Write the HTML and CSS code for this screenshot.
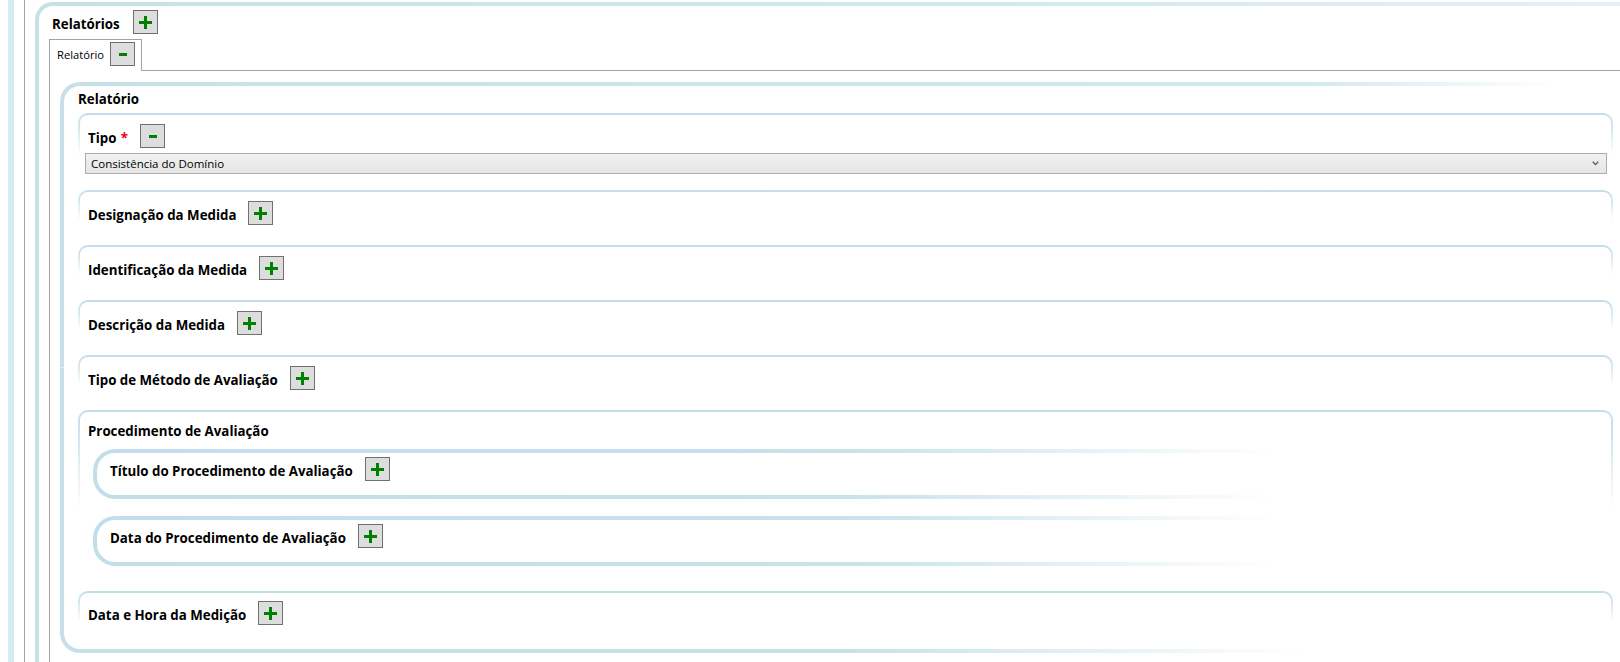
FILE: index.html
```html
<!DOCTYPE html>
<html lang="pt">
<head>
<meta charset="utf-8">
<title>Relatórios</title>
<link rel="stylesheet" href="styles.css">
</head>
<body>
<div class="page">
  <div class="rail"></div>
  <div class="divider"></div>
  <section class="group">
    <div class="head">
      <span class="title">Relatórios</span>
      <button class="btn" type="button"><svg class="ico-plus" width="13" height="13" viewBox="0 0 13 13"><path d="M5 0h3v5h5v3H8v5H5V8H0V5h5z"/></svg></button>
    </div>
    <div class="tabs">
      <div class="tabstrip">
        <div class="tab">
          <span class="tab-label">Relatório</span>
          <button class="btn" type="button"><svg class="ico-minus" width="8" height="3" viewBox="0 0 8 3"><rect width="8" height="3"/></svg></button>
        </div>
      </div>
      <div class="tabpanel">
        <section class="report">
          <div class="report-title">Relatório</div>

          <div class="field field-tipo">
            <div class="row">
              <span class="label">Tipo <span class="req">*</span></span>
              <button class="btn" type="button"><svg class="ico-minus" width="8" height="3" viewBox="0 0 8 3"><rect width="8" height="3"/></svg></button>
            </div>
            <div class="select">
              <span>Consistência do Domínio</span>
              <svg class="chev" width="7" height="5" viewBox="0 0 7 5"><path d="M0.8 0.8L3.5 3.6L6.2 0.8"/></svg>
            </div>
          </div>

          <div class="field">
            <div class="row">
              <span class="label">Designação da Medida</span>
              <button class="btn" type="button"><svg class="ico-plus" width="13" height="13" viewBox="0 0 13 13"><path d="M5 0h3v5h5v3H8v5H5V8H0V5h5z"/></svg></button>
            </div>
          </div>

          <div class="field">
            <div class="row">
              <span class="label">Identificação da Medida</span>
              <button class="btn" type="button"><svg class="ico-plus" width="13" height="13" viewBox="0 0 13 13"><path d="M5 0h3v5h5v3H8v5H5V8H0V5h5z"/></svg></button>
            </div>
          </div>

          <div class="field">
            <div class="row">
              <span class="label">Descrição da Medida</span>
              <button class="btn" type="button"><svg class="ico-plus" width="13" height="13" viewBox="0 0 13 13"><path d="M5 0h3v5h5v3H8v5H5V8H0V5h5z"/></svg></button>
            </div>
          </div>

          <div class="field">
            <div class="row">
              <span class="label">Tipo de Método de Avaliação</span>
              <button class="btn" type="button"><svg class="ico-plus" width="13" height="13" viewBox="0 0 13 13"><path d="M5 0h3v5h5v3H8v5H5V8H0V5h5z"/></svg></button>
            </div>
          </div>

          <div class="field field-group">
            <div class="group-title">Procedimento de Avaliação</div>
            <div class="sub">
              <div class="row">
                <span class="label">Título do Procedimento de Avaliação</span>
                <button class="btn" type="button"><svg class="ico-plus" width="13" height="13" viewBox="0 0 13 13"><path d="M5 0h3v5h5v3H8v5H5V8H0V5h5z"/></svg></button>
              </div>
            </div>
            <div class="sub">
              <div class="row">
                <span class="label">Data do Procedimento de Avaliação</span>
                <button class="btn" type="button"><svg class="ico-plus" width="13" height="13" viewBox="0 0 13 13"><path d="M5 0h3v5h5v3H8v5H5V8H0V5h5z"/></svg></button>
              </div>
            </div>
          </div>

          <div class="field field-last">
            <div class="row">
              <span class="label">Data e Hora da Medição</span>
              <button class="btn" type="button"><svg class="ico-plus" width="13" height="13" viewBox="0 0 13 13"><path d="M5 0h3v5h5v3H8v5H5V8H0V5h5z"/></svg></button>
            </div>
          </div>
        </section>
      </div>
    </div>
  </section>
</div>
</body>
</html>
```

FILE: styles.css
```css
* { box-sizing: border-box; }

html, body {
  margin: 0;
  padding: 0;
  background: #ffffff;
}

body {
  font-family: "Open Sans", "Noto Sans", "Liberation Sans", sans-serif;
  color: #000;
  overflow: hidden;
}

.page {
  display: flex;
  height: 662px;
  overflow: hidden;
}

.rail {
  flex: none;
  width: 6px;
  margin-left: 8px;
  background: #d6eaf2;
}

.divider {
  flex: none;
  width: 1px;
  margin-left: 10px;
  background: #a3a3a3;
}

.group {
  flex: 1;
  min-width: 0;
  margin-left: 10px;
  margin-top: 2px;
  border: 4px solid transparent;
  border-right: 0;
  border-bottom: 0;
  border-top-left-radius: 18px;
  background:
    linear-gradient(#fff, #fff) padding-box,
    linear-gradient(to right, #c6e0ea, #d2e8f0 60%, #e4f1f6) border-box;
  padding: 4px 0 0 10px;
}

.head {
  display: flex;
  align-items: center;
  gap: 13px;
  height: 24px;
  padding-left: 3px;
}

.title,
.label,
.report-title,
.group-title {
  font-weight: 700;
  font-size: 13.3px;
  line-height: 18px;
  white-space: nowrap;
}

.title,
.label {
  padding-top: 3px;
}

.btn {
  flex: none;
  width: 25px;
  height: 24px;
  padding: 0;
  margin: 0;
  border: 1px solid #707070;
  background: #dddddd;
  display: flex;
  align-items: center;
  justify-content: center;
}

.ico-plus path { fill: #008000; }
.ico-minus rect { fill: #008000; }

.tabs {
  margin-top: 5px;
}

.tabstrip {
  display: flex;
}

.tab {
  position: relative;
  z-index: 1;
  display: flex;
  align-items: flex-start;
  gap: 6px;
  height: 32px;
  margin-bottom: -1px;
  padding: 2px 6px 0 7px;
  border: 1px solid #a3a3a3;
  border-bottom: 0;
  background: #fff;
}

.tab-label {
  font-size: 11.2px;
  line-height: 25px;
  white-space: nowrap;
}

.tabpanel {
  border-top: 1px solid #a3a3a3;
  border-left: 1px solid #a3a3a3;
  padding: 11px 0 30px 10px;
}

.report {
  border: 4px solid transparent;
  border-right: 0;
  border-radius: 20px 0 0 20px;
  background:
    linear-gradient(#fff, #fff) padding-box,
    linear-gradient(to right, #c6e0ea 0%, #d3e8f0 80%, rgba(214, 234, 242, 0) 96%) top left / 100% 50% no-repeat border-box,
    linear-gradient(to right, #c6e0ea 0%, #c6e0ea 50%, rgba(198, 224, 234, 0) 80%) bottom left / 100% 50% no-repeat border-box;
  padding: 4px 7px 0 14px;
}

.report-title {
  margin-bottom: 5px;
}

.field {
  border: 2px solid transparent;
  border-bottom: 0;
  border-radius: 10px 10px 0 0;
  background:
    linear-gradient(#fff, #fff) padding-box,
    linear-gradient(to bottom, #c2dfe9 0, #c8e2ec 10%, rgba(200, 226, 236, 0) 55%) border-box;
  padding: 9px 0 20px 8px;
}

.row {
  display: flex;
  align-items: center;
  gap: 12px;
  height: 24px;
}

.req {
  color: #e3001b;
  margin-left: 1px;
}

.field-tipo {
  padding-bottom: 16px;
}

.select {
  display: flex;
  align-items: center;
  justify-content: space-between;
  height: 21px;
  margin: 5px 4px 0 -3px;
  padding: 0 7px 0 5px;
  border: 1px solid #acacac;
  background: linear-gradient(#f1f1f1, #e5e5e5);
  font-size: 11.5px;
  line-height: 19px;
  white-space: nowrap;
}

.chev path {
  fill: none;
  stroke: #555;
  stroke-width: 1.3;
}

.field-group {
  padding: 10px 0 25px 8px;
}

.group-title {
  margin-bottom: 9px;
}

.sub {
  margin-left: 5px;
  border: 4px solid transparent;
  border-right: 0;
  border-radius: 22px 0 0 22px;
  background:
    linear-gradient(#fff, #fff) padding-box,
    linear-gradient(to right, #c2dfe9 0%, #c8e2ec 50%, rgba(200, 226, 236, 0) 78%) border-box;
  padding: 4px 0 14px 13px;
}

.sub + .sub {
  margin-top: 17px;
}

.field-last {
  padding: 8px 0 24px 8px;
}
```
